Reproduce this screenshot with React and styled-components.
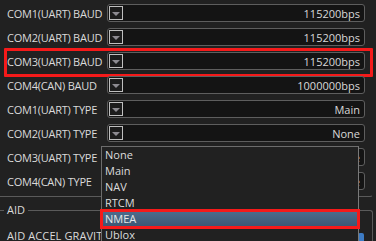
import React from "react";
import styled, { createGlobalStyle } from "styled-components";

const Global = createGlobalStyle`
  html, body { margin: 0; padding: 0; background: #212121; }
  * { box-sizing: border-box; }
`;

const Page = styled.div`
  position: relative;
  width: 376px;
  height: 241px;
  overflow: hidden;
  background: #212121;
  font-family: "Open Sans", "Noto Sans", sans-serif;
  font-size: 11px;
  color: #dadada;
`;

const Settings = styled.div`
  display: flex;
  flex-direction: column;
  padding-top: 1px;
  width: 373px;
  height: 197px;
  border-bottom: 1px solid #5a5a5a;
  border-right: 1px solid transparent;
  border-bottom-right-radius: 3px;
`;

const Row = styled.div`
  position: relative;
  display: flex;
  align-items: center;
  height: 24px;
  padding-left: 7px;
  ${(p) =>
    p.$marked &&
    `
    &::after {
      content: "";
      position: absolute;
      left: 4px;
      top: -1px;
      width: 363px;
      height: 23px;
      border: 3px solid #f51a1a;
      border-radius: 1px;
      pointer-events: none;
    }
  `}
`;

const Label = styled.span`
  width: 100px;
  white-space: nowrap;
  overflow: hidden;
  letter-spacing: -0.25px;
`;

const Combo = styled.div`
  display: flex;
  align-items: center;
  width: 258px;
  height: 18px;
  padding: 0 4px 0 1px;
  background: #141414;
  border: 1px solid #5e5e5e;
  border-radius: 3px;
`;

const ArrowBtn = styled.div`
  display: flex;
  align-items: center;
  justify-content: center;
  width: 14px;
  height: 14px;
  border: 1px solid #bfbfbf;
  background: #1c1c1c;
`;

const Triangle = styled.span`
  width: 0;
  height: 0;
  border-left: 4px solid transparent;
  border-right: 4px solid transparent;
  border-top: 4px solid #8c8a90;
  margin-top: 1px;
`;

const Value = styled.span`
  flex: 1;
  text-align: right;
  color: #d8d8d8;
`;

const Group = styled.div`
  margin-top: 13px;
  width: 373px;
  height: 40px;
  border-top: 1px solid #5a5a5a;
  border-right: 1px solid #5a5a5a;
  border-top-right-radius: 3px;
`;

const GroupTitle = styled.div`
  margin-top: -9px;
  margin-left: 4px;
  padding: 0 3px;
  width: fit-content;
  background: #212121;
  line-height: 16px;
`;

const GroupRow = styled.div`
  display: flex;
  align-items: center;
  justify-content: space-between;
  height: 18px;
  margin-top: 8px;
  padding-left: 7px;
  padding-right: 8px;
  letter-spacing: 0.1px;
`;

const SpinBtn = styled.div`
  width: 6px;
  height: 12px;
  margin-top: 8px;
  border-radius: 2px;
  background: #3d7bc4;
`;

const List = styled.div`
  position: absolute;
  left: 101px;
  top: 146px;
  width: 258px;
  height: 110px;
  display: flex;
  flex-direction: column;
  background: #212121;
  border: 1px solid #6c6c6c;
  border-right-color: #7a7a7a;
`;

const Item = styled.div`
  height: 16px;
  line-height: 16px;
  padding-left: 3px;
  color: #dcdcdc;
  ${(p) =>
    p.$active &&
    `
    background: linear-gradient(#4e6d8d, #3b5673);
    outline: 3px solid #f51a1a;
    outline-offset: -1px;
    color: #e8e8e8;
  `}
`;

const rows = [
  ["COM1(UART) BAUD", "115200bps"],
  ["COM2(UART) BAUD", "115200bps"],
  ["COM3(UART) BAUD", "115200bps", true],
  ["COM4(CAN) BAUD", "1000000bps"],
  ["COM1(UART) TYPE", "Main"],
  ["COM2(UART) TYPE", "None"],
  ["COM3(UART) TYPE", "None"],
  ["COM4(CAN) TYPE", "None"],
];

const options = ["None", "Main", "NAV", "RTCM", "NMEA", "Ublox"];

export default function App() {
  return (
    <Page>
      <Global />
      <Settings>
        {rows.map(([label, value, marked]) => (
          <Row key={label} $marked={marked}>
            <Label>{label}</Label>
            <Combo>
              <ArrowBtn>
                <Triangle />
              </ArrowBtn>
              <Value>{value}</Value>
            </Combo>
          </Row>
        ))}
      </Settings>
      <Group>
        <GroupTitle>AID</GroupTitle>
        <GroupRow>
          <span>AID ACCEL GRAVITY</span>
          <SpinBtn />
        </GroupRow>
      </Group>
      <List>
        {options.map((o) => (
          <Item key={o} $active={o === "NMEA"}>
            {o}
          </Item>
        ))}
      </List>
    </Page>
  );
}
